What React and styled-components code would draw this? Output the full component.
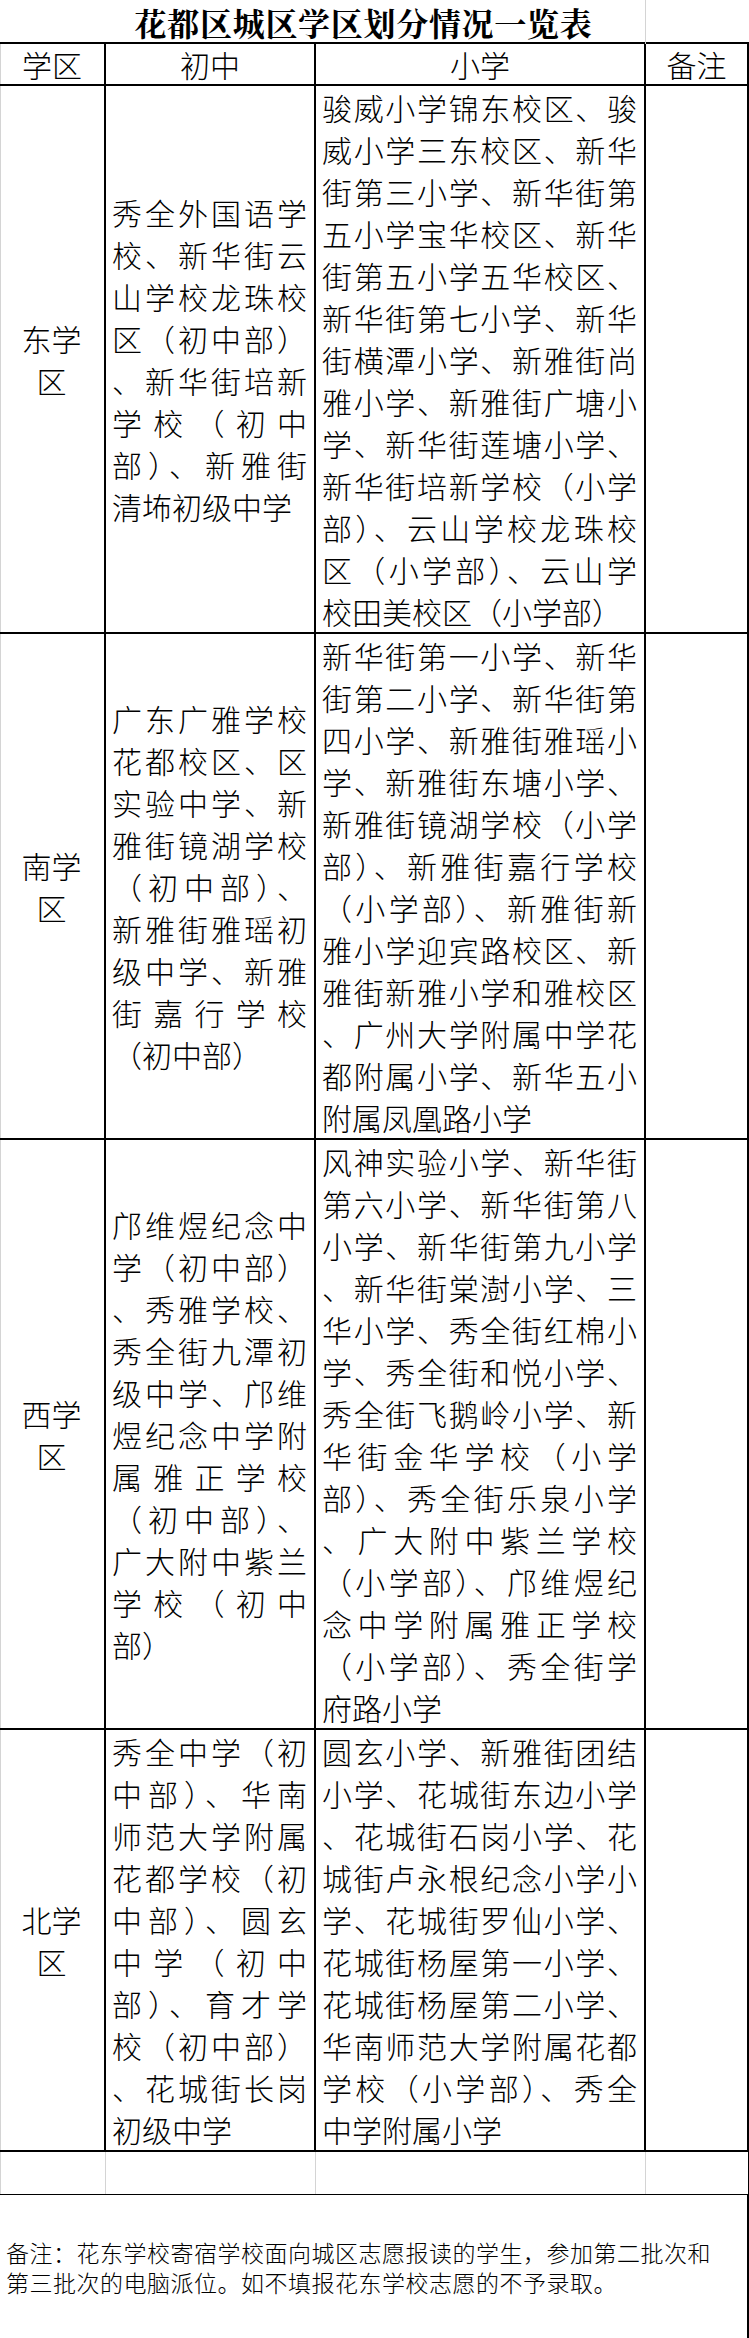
import React from 'react';
import styled, { createGlobalStyle } from 'styled-components';

const GlobalStyle = createGlobalStyle`
  html, body {
    margin: 0;
    padding: 0;
    background: #fff;
  }
  body {
    font-family: "Noto Sans CJK SC", "Noto Sans", sans-serif;
    color: #000;
  }
`;

const Sheet = styled.div`
  width: 749px;
`;

const TitleRow = styled.div`
  display: grid;
  grid-template-columns: 646px 103px;
  height: 42px;
`;

const Title = styled.div`
  padding-left: 82px;
  text-align: center;
  font-family: "Noto Serif CJK SC", "Noto Sans CJK SC", serif;
  font-weight: 700;
  font-size: 32px;
  letter-spacing: 0.7px;
  line-height: 44px;
  border-right: 1px solid #d4d4d4;
`;

const Spare = styled.div``;

const Table = styled.div`
  display: grid;
  grid-template-columns: 106px 210px 330px 103px;
  border-top: 2px solid #000;
`;

const HeadCell = styled.div`
  height: 40px;
  border-right: 2px solid #000;
  border-bottom: 2px solid #000;
  box-shadow: ${p => (p.$first ? 'inset 1px 0 #d4d4d4' : 'none')};
  font-size: 30px;
  font-weight: 300;
  line-height: 40px;
  text-align: center;
`;

const Cell = styled.div`
  display: flex;
  flex-direction: column;
  justify-content: ${p => (p.$top ? 'flex-start' : 'center')};
  padding: 0 7px 0 6px;
  border-right: 2px solid #000;
  border-bottom: 2px solid #000;
  box-shadow: ${p => (p.$first ? 'inset 1px 0 #d4d4d4' : 'none')};
  font-size: 30px;
  font-weight: 300;
  line-height: 42px;
  text-align: ${p => (p.$center ? 'center' : 'left')};
`;

const Line = styled.span`
  display: block;
  text-align: ${p => (p.$last ? 'inherit' : 'justify')};
  text-align-last: ${p => (p.$last ? 'auto' : 'justify')};
`;

const BlankCell = styled.div`
  height: 42px;
  border-right: 1px solid ${p => (p.$end ? '#000' : '#d4d4d4')};
  box-shadow: ${p => (p.$first ? 'inset 1px 0 #d4d4d4' : 'none')};
`;

const Note = styled.div`
  display: flex;
  flex-direction: column;
  justify-content: center;
  height: 144px;
  padding-left: 6px;
  border-top: 1px solid #000;
  border-right: 2px solid #000;
  border-bottom: 2px solid #000;
  font-size: 23px;
  font-weight: 300;
  letter-spacing: 0.5px;
  line-height: 30px;
`;

const districts = [
  {
    name: ['东学', '区'],
    junior: [
      '秀全外国语学', '校、新华街云', '山学校龙珠校', '区（初中部）',
      '、新华街培新', '学校（初中', '部）、新雅街', '清㘵初级中学',
    ],
    primary: [
      '骏威小学锦东校区、骏', '威小学三东校区、新华', '街第三小学、新华街第',
      '五小学宝华校区、新华', '街第五小学五华校区、', '新华街第七小学、新华',
      '街横潭小学、新雅街尚', '雅小学、新雅街广塘小', '学、新华街莲塘小学、',
      '新华街培新学校（小学', '部）、云山学校龙珠校', '区（小学部）、云山学',
      '校田美校区（小学部）',
    ],
  },
  {
    name: ['南学', '区'],
    junior: [
      '广东广雅学校', '花都校区、区', '实验中学、新', '雅街镜湖学校',
      '（初中部）、', '新雅街雅瑶初', '级中学、新雅', '街嘉行学校', '（初中部）',
    ],
    primary: [
      '新华街第一小学、新华', '街第二小学、新华街第', '四小学、新雅街雅瑶小',
      '学、新雅街东塘小学、', '新雅街镜湖学校（小学', '部）、新雅街嘉行学校',
      '（小学部）、新雅街新', '雅小学迎宾路校区、新', '雅街新雅小学和雅校区',
      '、广州大学附属中学花', '都附属小学、新华五小', '附属凤凰路小学',
    ],
  },
  {
    name: ['西学', '区'],
    junior: [
      '邝维煜纪念中', '学（初中部）', '、秀雅学校、', '秀全街九潭初',
      '级中学、邝维', '煜纪念中学附', '属雅正学校', '（初中部）、',
      '广大附中紫兰', '学校（初中', '部）',
    ],
    primary: [
      '风神实验小学、新华街', '第六小学、新华街第八', '小学、新华街第九小学',
      '、新华街棠澍小学、三', '华小学、秀全街红棉小', '学、秀全街和悦小学、',
      '秀全街飞鹅岭小学、新', '华街金华学校（小学', '部）、秀全街乐泉小学',
      '、广大附中紫兰学校', '（小学部）、邝维煜纪', '念中学附属雅正学校',
      '（小学部）、秀全街学', '府路小学',
    ],
  },
  {
    name: ['北学', '区'],
    junior: [
      '秀全中学（初', '中部）、华南', '师范大学附属', '花都学校（初',
      '中部）、圆玄', '中学（初中', '部）、育才学', '校（初中部）',
      '、花城街长岗', '初级中学',
    ],
    primary: [
      '圆玄小学、新雅街团结', '小学、花城街东边小学', '、花城街石岗小学、花',
      '城街卢永根纪念小学小', '学、花城街罗仙小学、', '花城街杨屋第一小学、',
      '花城街杨屋第二小学、', '华南师范大学附属花都', '学校（小学部）、秀全',
      '中学附属小学',
    ],
  },
];

function Lines({ items }) {
  return items.map((text, i) => (
    <Line key={i} $last={i === items.length - 1}>{text}</Line>
  ));
}

export default function App() {
  return (
    <Sheet>
      <GlobalStyle />
      <TitleRow>
        <Title>花都区城区学区划分情况一览表</Title>
        <Spare />
      </TitleRow>
      <Table>
        <HeadCell $first>学区</HeadCell>
        <HeadCell>初中</HeadCell>
        <HeadCell>小学</HeadCell>
        <HeadCell>备注</HeadCell>
        {districts.map(d => (
          <React.Fragment key={d.name[0]}>
            <Cell $first $center>
              {d.name.map(n => <span key={n}>{n}</span>)}
            </Cell>
            <Cell><Lines items={d.junior} /></Cell>
            <Cell $top><Lines items={d.primary} /></Cell>
            <Cell />
          </React.Fragment>
        ))}
        <BlankCell $first />
        <BlankCell />
        <BlankCell />
        <BlankCell $end />
      </Table>
      <Note>
        <span>备注：花东学校寄宿学校面向城区志愿报读的学生，参加第二批次和</span>
        <span>第三批次的电脑派位。如不填报花东学校志愿的不予录取。</span>
      </Note>
    </Sheet>
  );
}
